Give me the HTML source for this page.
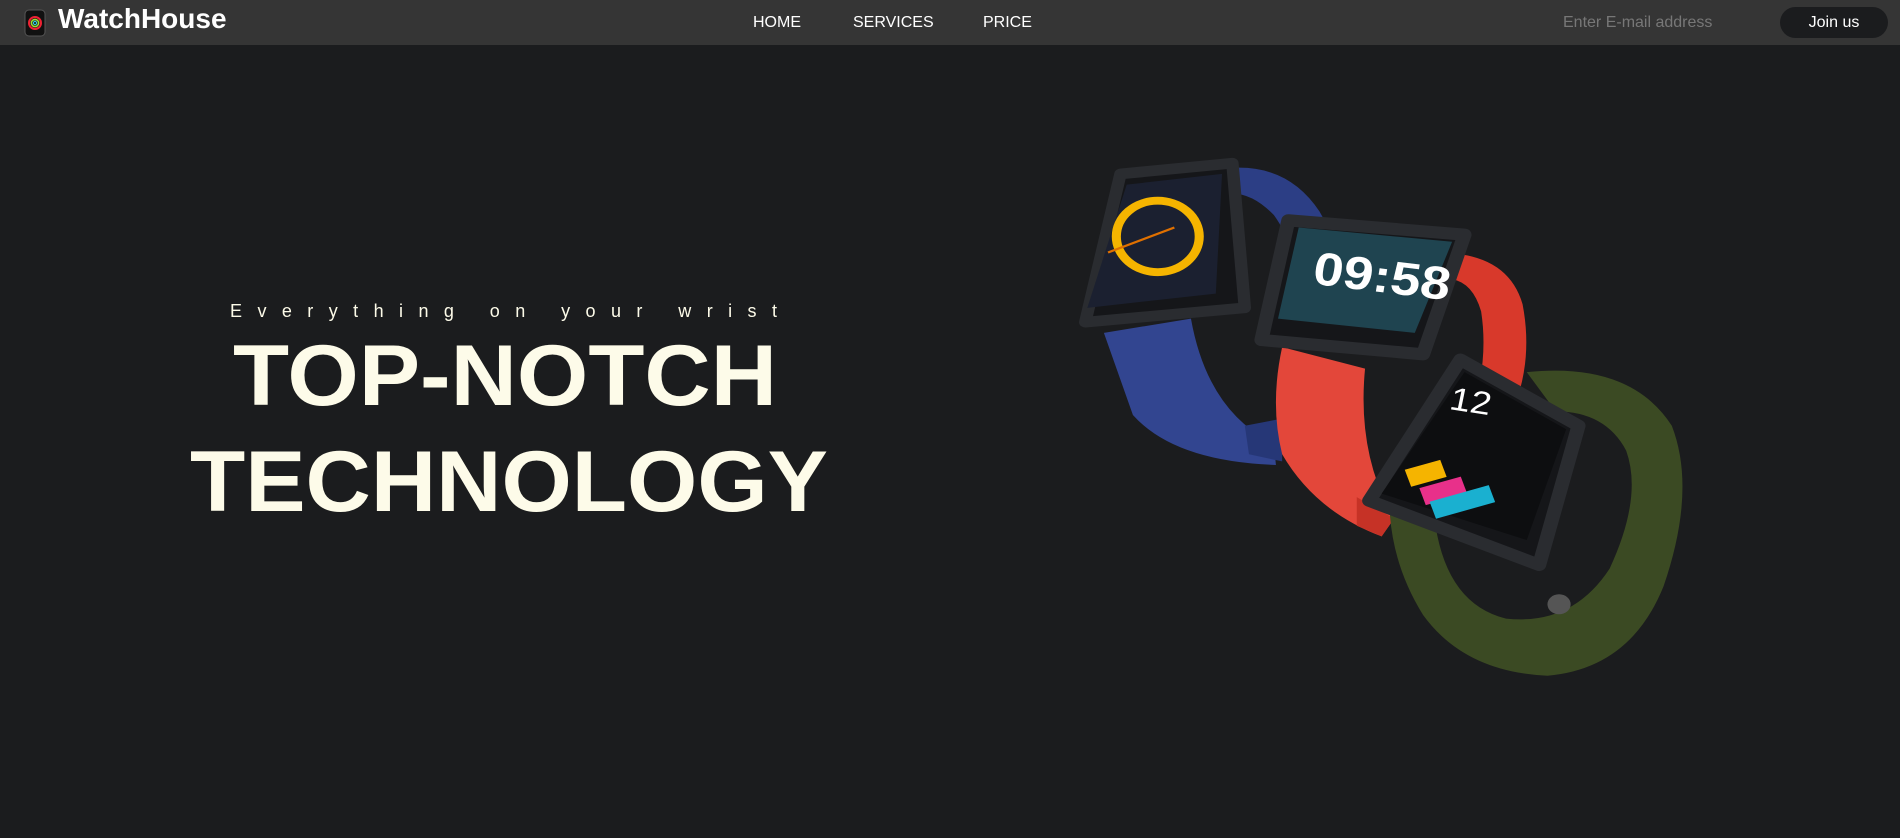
<!DOCTYPE html>
<html><head><meta charset="utf-8"><style>
*{margin:0;padding:0;box-sizing:border-box}
body{width:1900px;height:838px;background:#1b1c1e;font-family:"Liberation Sans",sans-serif;overflow:hidden;position:relative}
.hdr{position:absolute;left:0;top:0;width:1900px;height:45px;background:#353535}
.logo{position:absolute;left:58px;top:3px;font-size:28px;font-weight:bold;color:#fff}
.nav{position:absolute;top:14px;color:#fff;font-size:16px}
.email{position:absolute;left:1563px;top:14px;color:#777;font-size:16px}
.btn{position:absolute;left:1780px;top:7px;width:108px;height:31px;background:#1b1c1e;border-radius:16px;color:#fff;font-size:16px;text-align:center;line-height:31px}
svg{position:absolute}
</style></head><body>
<div class="hdr">
<svg style="left:24px;top:9px" width="22" height="28" viewBox="0 0 22 28"><rect x="1" y="1" width="20" height="26" rx="4" fill="#111" stroke="#555"/><circle cx="11" cy="14" r="6" fill="none" stroke="#e23" stroke-width="2"/><circle cx="11" cy="14" r="3.6" fill="none" stroke="#9d3" stroke-width="1.6"/><circle cx="11" cy="14" r="1.6" fill="none" stroke="#3cd" stroke-width="1.2"/></svg>
<div class="logo">WatchHouse</div>
<div class="nav" style="left:753px">HOME</div>
<div class="nav" style="left:853px">SERVICES</div>
<div class="nav" style="left:983px">PRICE</div>
<div class="email">Enter E-mail address</div>
<div class="btn">Join us</div>
</div>
<svg style="left:0;top:0" width="1000" height="838">
<g fill="#fdfbe9" font-family="Liberation Sans,sans-serif">
<text x="230" y="317" font-size="18" textLength="547" lengthAdjust="spacing">Everything on your wrist</text>
<text x="233" y="405" font-size="86" font-weight="bold" textLength="544" lengthAdjust="spacingAndGlyphs">TOP-NOTCH</text>
<text x="190" y="511" font-size="86" font-weight="bold" textLength="638" lengthAdjust="spacingAndGlyphs">TECHNOLOGY</text>
</g></svg>
<svg style="left:1050px;top:140px" width="650" height="560" viewBox="0 0 1568 1568" preserveAspectRatio="none">
<path d="M420,80 Q570,60 650,200 Q710,320 690,420 L610,430 Q590,290 540,210 Q490,150 440,150 Z" fill="#2c3e85"/>
<path d="M130,540 L340,500 Q380,760 540,850 L545,910 Q300,900 200,770 Z" fill="#324590"/>
<path d="M470,800 L560,780 L560,900 L480,880 Z" fill="#263777"/>
<polygon points="170,95 440,65 470,470 85,510" fill="#151619" stroke="#2a2c30" stroke-width="30" stroke-linejoin="round"/>
<polygon points="185,125 415,95 400,430 90,470" fill="#1b2030"/>
<circle cx="260" cy="270" r="100" fill="none" stroke="#f5b400" stroke-width="22"/>
<line x1="140" y1="315" x2="300" y2="245" stroke="#e07000" stroke-width="6"/>
<path d="M990,320 Q1110,340 1140,460 Q1170,640 1100,800 L1010,790 Q1060,630 1040,480 Q1020,400 970,390 Z" fill="#d8392b"/>
<path d="M560,580 L760,640 Q740,880 830,1060 L800,1110 Q640,1040 560,880 Q530,740 560,580 Z" fill="#e3473a"/>
<path d="M740,1000 L830,1060 L800,1110 L740,1080 Z" fill="#c63226"/>
<polygon points="575,225 1000,265 900,600 510,560" fill="#151619" stroke="#2a2c30" stroke-width="34" stroke-linejoin="round"/>
<polygon points="600,245 970,285 880,540 550,500" fill="#1f4450"/>
<text x="635" y="420" font-size="130" font-weight="bold" fill="#fff" font-family="Liberation Sans,sans-serif" transform="rotate(8 760 380)">09:58</text>
<path d="M1150,650 Q1400,620 1500,800 Q1560,980 1480,1250 Q1400,1480 1200,1500 Q1000,1490 900,1330 Q830,1200 820,1050 L930,1080 Q960,1300 1100,1340 Q1260,1360 1350,1200 Q1430,1000 1390,870 Q1340,760 1220,760 Z" fill="#3b4a23"/>
<polygon points="990,615 1275,800 1180,1190 770,1010" fill="#151619" stroke="#2a2c30" stroke-width="34" stroke-linejoin="round"/>
<polygon points="1000,650 1245,810 1150,1120 800,990" fill="#0d0e10"/>
<text x="960" y="760" font-size="90" fill="#fff" font-family="Liberation Sans,sans-serif" transform="rotate(10 1000 760)">12</text>
<rect x="860" y="910" width="90" height="50" fill="#f5b400" transform="rotate(-18 900 930)"/>
<rect x="895" y="960" width="105" height="50" fill="#e8308a" transform="rotate(-18 940 980)"/>
<rect x="920" y="990" width="150" height="50" fill="#1ab0d0" transform="rotate(-18 990 1015)"/>
<circle cx="1228" cy="1300" r="28" fill="#555"/>
</svg>
</body></html>
